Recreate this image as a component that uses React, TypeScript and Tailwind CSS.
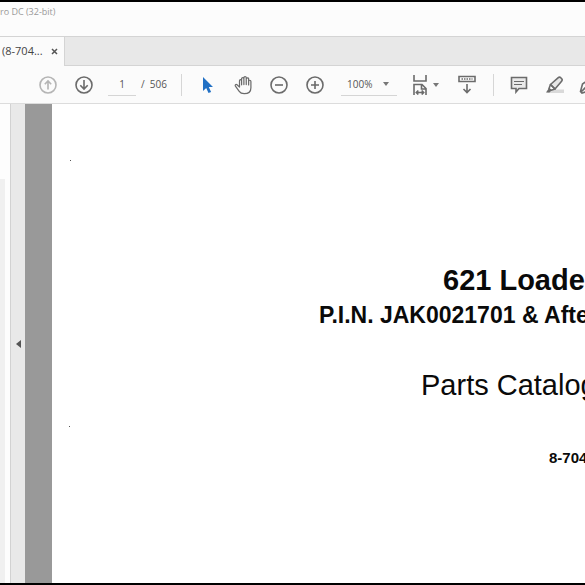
import type { ReactNode } from 'react';

function ToolButton({ label, className = '', children }: { label: string; className?: string; children: ReactNode }) {
  return (
    <button
      type="button"
      aria-label={label}
      className={`flex h-6 shrink-0 items-center justify-center text-[#6b6b6b] ${className}`}
    >
      {children}
    </button>
  );
}

function Caret() {
  return (
    <svg width="6" height="4" viewBox="0 0 6 4" fill="#777" aria-hidden="true">
      <path d="M0 0h6L3 4z" />
    </svg>
  );
}

// circle with an arrow, a minus or a plus inside
function CircleIcon({ d }: { d: string }) {
  return (
    <svg width="18" height="18" viewBox="0 0 18 18" fill="none" stroke="currentColor" strokeWidth="1.6" aria-hidden="true">
      <circle cx="9" cy="9" r="8" />
      <path d={d} />
    </svg>
  );
}

function Toolbar() {
  return (
    <div className="flex h-[38px] shrink-0 items-center overflow-hidden border-b border-[#dcdcdc] bg-[#fbfbfb] pl-9 text-[10px] text-[#555]">
      <ToolButton label="Previous page" className="w-6 text-[#b5b5b5]!">
        <CircleIcon d="M9 13.5V5M5.8 8.2 9 5l3.2 3.2" />
      </ToolButton>
      <ToolButton label="Next page" className="ml-3 w-6">
        <CircleIcon d="M9 4v9M5.3 9.3 9 13l3.7-3.7" />
      </ToolButton>
      <input
        aria-label="Page number"
        defaultValue="1"
        className="ml-3 h-[22px] w-7 shrink-0 border-b border-[#d5d5d5] bg-transparent text-center outline-none"
      />
      <span className="ml-1 w-10 shrink-0 whitespace-pre pl-px">/  506</span>
      <div className="ml-px h-[22px] w-px shrink-0 bg-[#d6d6d6]" />

      <ToolButton label="Select" className="ml-3.5 w-6">
        <svg width="12" height="18" viewBox="0 0 12 18" fill="#2170c4" aria-hidden="true">
          <path d="M1 1v14l3.2-3 2.3 5 2.6-1.1-2.3-5H11z" />
        </svg>
      </ToolButton>
      <ToolButton label="Pan" className="ml-[11px] w-6">
        <svg width="19" height="20" viewBox="0 0 20 20" fill="none" stroke="currentColor" strokeWidth="1.3" strokeLinecap="round" strokeLinejoin="round" aria-hidden="true">
          <path d="M5.8 12.2 3.2 9.8C2 8.8.7 9.9 1.5 11.2l4 5.6c1 1.5 2.5 2.4 5.200 2.4 4.300 0 7.100-2.400 7.100-6.400V6.200c0-1.600-2.400-1.600-2.400 0v3.800V3.600c0-1.600-2.500-1.600-2.500 0v5.900V2.400c0-1.700-2.500-1.700-2.500 0v7.100V3.500c0-1.600-2.400-1.600-2.400 0v6.300V5.500c0-1.500-2.200-1.500-2.200 0z" />
        </svg>
      </ToolButton>
      <ToolButton label="Zoom out" className="ml-3 w-6">
        <CircleIcon d="M5 9h8" />
      </ToolButton>
      <ToolButton label="Zoom in" className="ml-3 w-6">
        <CircleIcon d="M5 9h8M9 5v8" />
      </ToolButton>
      <button
        type="button"
        aria-label="Zoom level 100%"
        className="ml-3.5 flex h-[22px] w-14 shrink-0 items-center justify-between border-b border-[#d5d5d5] pr-2 pl-1.5"
      >
        100%
        <Caret />
      </button>

      <ToolButton label="Fit width" className="ml-[15px] gap-1">
        <svg width="17" height="20" viewBox="0 0 17 20" fill="none" stroke="currentColor" strokeWidth="1.6" aria-hidden="true">
          <path d="M2 0v6h12V0M2 20V9.500h8l4 4V20M9.500 9.500V14H14M4.500 17.500h7M6.300 15.500l-2 2 2 2M9.700 15.500l2 2-2 2" />
        </svg>
        <Caret />
      </ToolButton>
      <ToolButton label="Read mode" className="ml-4 w-6">
        <svg width="18" height="19" viewBox="0 0 18 19" fill="none" stroke="currentColor" strokeWidth="1.600" aria-hidden="true">
          <path d="M1 1.500h16v5H1z" />
          <path d="M3.500 4h11" strokeDasharray="1.500 1" />
          <path d="M9 9v8.500M5.500 14 9 17.500l3.500-3.500" />
        </svg>
      </ToolButton>
      <div className="ml-3.5 h-[22px] w-px shrink-0 bg-[#d6d6d6]" />

      <ToolButton label="Comment" className="ml-[13px] w-6">
        <svg width="18" height="18" viewBox="0 0 18 18" fill="none" stroke="currentColor" strokeWidth="1.600" aria-hidden="true">
          <path d="M1.500 1.500h15v11H9l-3 3.500v-3.500H1.500z" fill="#eaeaea" />
          <path d="M4 5.500h10M4 8.500h8" strokeWidth="1.200" />
        </svg>
      </ToolButton>
      <ToolButton label="Highlight" className="ml-3 w-6">
        <svg width="20" height="18" viewBox="0 0 20 18" fill="none" stroke="currentColor" strokeWidth="1.600" strokeLinejoin="round" aria-hidden="true">
          <path d="M5 13.500h14v3.500H2z" fill="#d9d9d9" stroke="none" />
          <path d="M5.500 8.500 13 1.800q1.500-1.200 2.700-.1l1 1q1 1.200-.1 2.500L10 13z" fill="#e6e6e6" />
          <path d="M5.500 8.500 4 12.500l2.200 1.800L10 13z" />
          <path d="M4 12 1 16.500h3.500l2-2z" fill="currentColor" stroke="none" />
        </svg>
      </ToolButton>
      <ToolButton label="Sign" className="ml-[11px] w-6">
        <svg width="22" height="20" viewBox="0 0 22 20" fill="none" stroke="currentColor" strokeWidth="1.600" aria-hidden="true">
          <path d="M1.500 16.500 3.500 9l6-4 5 5-4 6-7.500 2zM2 17l6-6" />
        </svg>
      </ToolButton>
    </div>
  );
}

export default function App() {
  return (
    <div className="flex min-h-screen flex-col overflow-hidden border-t-2 border-b-2 border-black bg-white font-['Open_Sans','Noto_Sans',sans-serif]">
      <header className="flex h-[34px] shrink-0 items-start bg-[#fcfcfc] pt-0.5 text-[9px] leading-4 text-[#999]">
        <span>ro DC (32-bit)</span>
      </header>

      <div className="flex h-[30px] shrink-0 border-t border-b border-[#d4d4d4] bg-[#e8e8e8]">
        <div className="-mb-px flex w-[65px] items-center justify-between border-r border-[#d4d4d4] bg-[#fbfbfb] pr-1.5 pl-0.5 text-[11px] text-[#444]">
          <span>(8-704...</span>
          <button type="button" aria-label="Close tab">
            <svg width="7" height="7" viewBox="0 0 7 7" stroke="#555" strokeWidth="1.500" aria-hidden="true">
              <path d="m1 1 5 5M6 1 1 6" />
            </svg>
          </button>
        </div>
      </div>

      <Toolbar />

      <main className="flex flex-1">
        <aside className="flex w-[11px] shrink-0 border-r border-[#d2d2d2] bg-[#fdfdfd] pt-[75px]">
          <div className="w-[5px] bg-[#f0f0f0]" />
        </aside>
        <button
          type="button"
          aria-label="Collapse panel"
          className="flex w-3.5 shrink-0 items-center justify-center bg-[#e9e9e9]"
        >
          <svg width="5" height="8" viewBox="0 0 5 8" fill="#555" aria-hidden="true">
            <path d="M5 0v8L0 4z" />
          </svg>
        </button>
        <div className="w-[27px] shrink-0 bg-[#999]" />

        <article className="min-w-0 flex-1 overflow-hidden whitespace-nowrap bg-white font-['Liberation_Sans',Arial,sans-serif] text-[#0a0a0a]">
          <div className="mt-14 ml-[18px] h-px w-px bg-[#555]" />
          <h1 className="mt-[103px] ml-[391px] text-[29px] leading-8 font-bold">621 Loade</h1>
          <h2 className="mt-[3px] ml-[267px] text-[23px] leading-8 font-bold">P.I.N. JAK0021701 &amp; Afte</h2>
          <p className="mt-9 ml-[369px] text-[29px] leading-9">Parts Catalog</p>
          <div className="mt-[23px] ml-[17px] h-px w-px bg-[#555]" />
          <p className="mt-[21px] ml-[497px] text-[15px] leading-5 font-bold">8-704</p>
        </article>
      </main>
    </div>
  );
}
